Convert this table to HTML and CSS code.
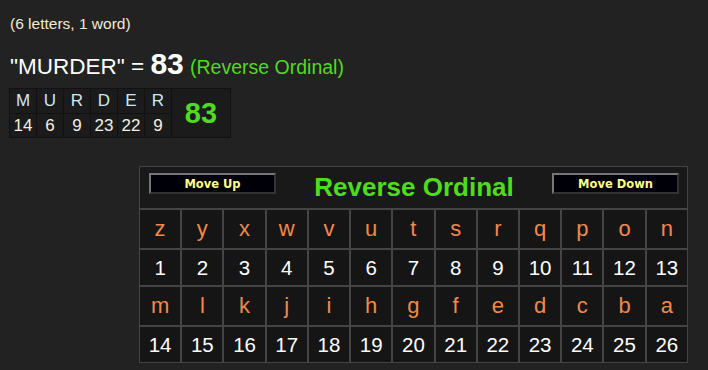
FILE: index.html
```html
<!DOCTYPE html>
<html lang="en">
<head>
<meta charset="utf-8">
<title>MURDER - Reverse Ordinal</title>
<link rel="stylesheet" href="styles.css">
</head>
<body>
<div class="page">
  <div class="count">(6 letters, 1 word)</div>
  <div class="result">"MURDER" = <b class="total">83</b> <span class="cipher">(Reverse Ordinal)</span></div>
  <table class="breakdown">
    <tr>
      <td class="bl">M</td><td class="bl">U</td><td class="bl">R</td><td class="bl">D</td><td class="bl">E</td><td class="bl">R</td>
      <td class="bsum" rowspan="2">83</td>
    </tr>
    <tr>
      <td class="bn">14</td><td class="bn">6</td><td class="bn">9</td><td class="bn">23</td><td class="bn">22</td><td class="bn">9</td>
    </tr>
  </table>
  <table class="cipher-table">
    <colgroup>
      <col><col><col><col><col><col><col><col><col><col><col><col><col>
    </colgroup>
    <tr>
      <td class="head" colspan="13">
        <div class="head-grid">
          <button class="move move-up">Move Up</button>
          <div class="title">Reverse Ordinal</div>
          <button class="move move-down">Move Down</button>
        </div>
      </td>
    </tr>
    <tr class="letters">
      <td>z</td><td>y</td><td>x</td><td>w</td><td>v</td><td>u</td><td>t</td><td>s</td><td>r</td><td>q</td><td>p</td><td>o</td><td>n</td>
    </tr>
    <tr class="nums">
      <td>1</td><td>2</td><td>3</td><td>4</td><td>5</td><td>6</td><td>7</td><td>8</td><td>9</td><td>10</td><td>11</td><td>12</td><td>13</td>
    </tr>
    <tr class="letters">
      <td>m</td><td>l</td><td>k</td><td>j</td><td>i</td><td>h</td><td>g</td><td>f</td><td>e</td><td>d</td><td>c</td><td>b</td><td>a</td>
    </tr>
    <tr class="nums">
      <td>14</td><td>15</td><td>16</td><td>17</td><td>18</td><td>19</td><td>20</td><td>21</td><td>22</td><td>23</td><td>24</td><td>25</td><td>26</td>
    </tr>
  </table>
</div>
</body>
</html>
```

FILE: styles.css
```css
html, body {
  margin: 0;
  padding: 0;
  background: #222222;
}

body {
  font-family: "Liberation Sans", Arial, sans-serif;
  color: #ffffff;
}

.page {
  padding: 15px 0 0 9px;
}

.count {
  font-size: 15.5px;
  line-height: 18px;
  color: #f3ead0;
  padding-left: 1px;
}

.result {
  margin-top: 17px;
  font-size: 22.5px;
  line-height: 28px;
  color: #ffffff;
  padding-left: 1px;
  white-space: nowrap;
}

.total {
  font-size: 30px;
  font-weight: bold;
}

.cipher {
  font-size: 19.5px;
  color: #4fdc1c;
}

.breakdown {
  margin-top: 7px;
  border-collapse: separate;
  border-spacing: 1px;
  background: #111111;
}

.breakdown td {
  background: #1b1b1b;
  text-align: center;
  padding: 0;
  font-size: 17px;
}

.bl {
  width: 26px;
  height: 24px;
  color: #cfe6f8;
}

.bn {
  height: 23px;
  color: #f2f0e8;
}

.bsum {
  width: 58px;
  color: #4fdc1c;
  font-weight: bold;
  font-size: 29px !important;
}

.cipher-table {
  margin: 28px 0 0 130px;
  width: 549px;
  table-layout: fixed;
  border-collapse: separate;
  border-spacing: 0;
  background: #161616;
}

.cipher-table td {
  border: 1px solid #444444;
  padding: 0;
  text-align: center;
  vertical-align: middle;
  box-sizing: border-box;
}

.cipher-table td.head {
  height: 43px;
  vertical-align: top;
  padding: 6px 8px 0 9px;
  background: #191919;
}

.head-grid {
  display: grid;
  grid-template-columns: 1fr auto 1fr;
  align-items: start;
}

.title {
  font-size: 26px;
  line-height: 30px;
  font-weight: bold;
  color: #4fdc1c;
  margin-top: -1px;
}

.move {
  box-sizing: border-box;
  width: 127px;
  height: 21px;
  padding: 0;
  margin: 0;
  background: #000008;
  border: 2px solid;
  border-color: #777777 #333333 #333333 #777777;
  color: #ffff8c;
  font-family: "DejaVu Sans", Verdana, sans-serif;
  font-weight: bold;
  font-size: 11.5px;
  line-height: 16px;
}

.move-up {
  justify-self: start;
}

.move-down {
  justify-self: end;
}

.letters td {
  height: 40px;
  font-size: 22px;
  color: #ef8a4e;
  background: #151515;
}

.nums td {
  height: 37px;
  font-size: 20.5px;
  color: #ffffff;
  background: #151515;
}
```
